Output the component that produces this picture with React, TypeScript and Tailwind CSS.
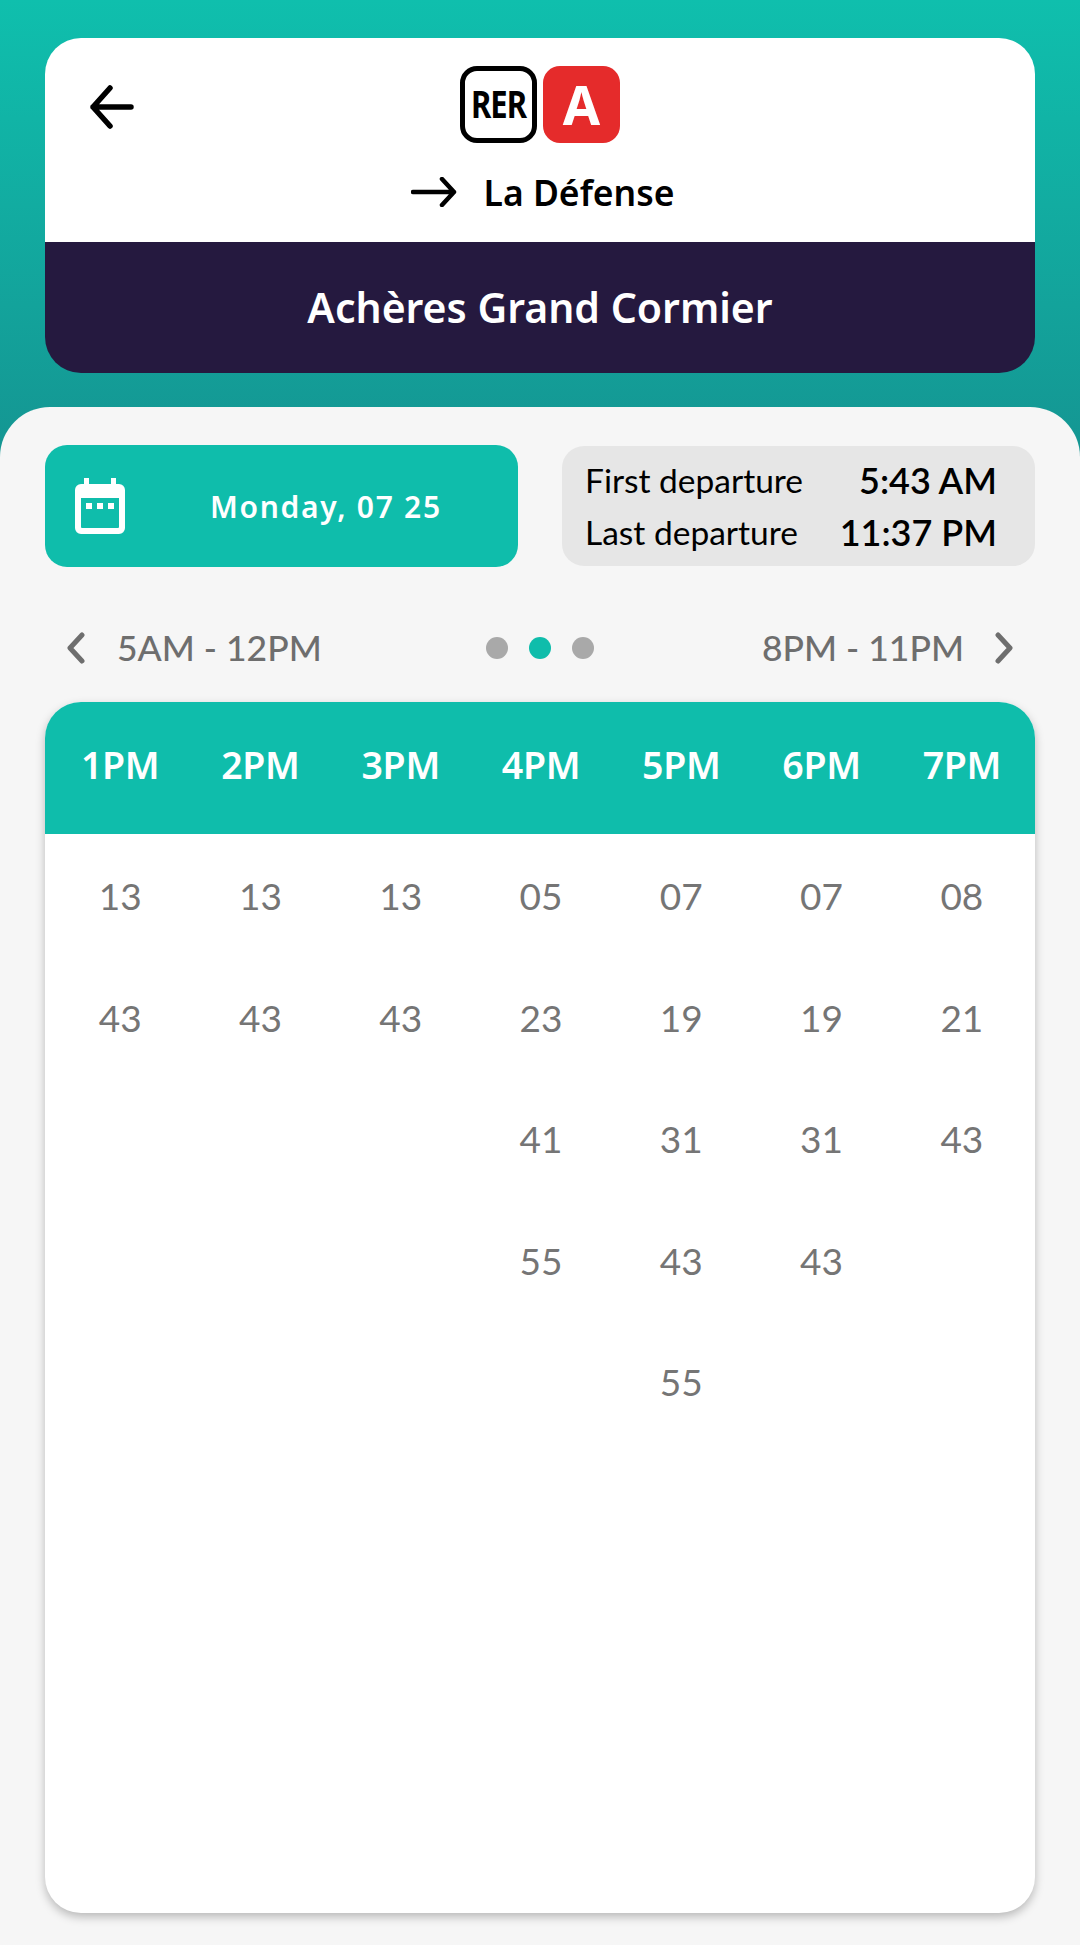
const hours = ['1PM', '2PM', '3PM', '4PM', '5PM', '6PM', '7PM'];

const times: string[][] = [
  ['13', '43'],
  ['13', '43'],
  ['13', '43'],
  ['05', '23', '41', '55'],
  ['07', '19', '31', '43', '55'],
  ['07', '19', '31', '43'],
  ['08', '21', '43'],
];

const ArrowLeft = () => (
  <svg width="46" height="46" viewBox="0 0 46 46" fill="none" stroke="#000" strokeWidth="5.5" strokeLinecap="round" strokeLinejoin="round">
    <path d="M42 23H4M21 4 4 23l17 19" />
  </svg>
);

const ArrowRight = () => (
  <svg width="46" height="30" viewBox="0 0 46 30" fill="none" stroke="#000" strokeWidth="4.5" strokeLinecap="round" strokeLinejoin="round">
    <path d="M2 15h41M31 2l12 13-12 13" />
  </svg>
);

const CalendarIcon = () => (
  <svg width="50" height="56" viewBox="0 0 50 56" fill="#fff">
    <path d="M9 0h5v6h22V0h5v6h3a6 6 0 0 1 6 6v38a6 6 0 0 1-6 6H6a6 6 0 0 1-6-6V12a6 6 0 0 1 6-6h3zM6 20v29a1 1 0 0 0 1 1h36a1 1 0 0 0 1-1V20z" fillRule="evenodd" />
    <rect x="11" y="25" width="6" height="6" />
    <rect x="22" y="25" width="6" height="6" />
    <rect x="33" y="25" width="6" height="6" />
  </svg>
);

const Chevron = ({ right }: { right?: boolean }) => (
  <svg width="20" height="32" viewBox="0 0 20 32" fill="none" stroke="#6e6e6e" strokeWidth="5" strokeLinecap="round" strokeLinejoin="round">
    <path d={right ? 'M4 3l12 13L4 29' : 'M16 3 4 16l12 13'} />
  </svg>
);

export default function App() {
  return (
    <div className="h-[1945px] w-[1080px] overflow-hidden bg-[#f6f6f6] font-['Noto_Sans',sans-serif]">
      <div className="h-[460px] bg-gradient-to-b from-[#0fbfad] to-[#149592] px-[45px] pt-[38px]">
        <div className="h-[335px] overflow-hidden rounded-[36px]">
          <div className="relative h-[204px] bg-white">
            <div className="absolute left-[44px] top-[46px]">
              <ArrowLeft />
            </div>
            <div className="flex justify-center gap-[6px] pt-[28px]">
              <div className="flex h-[77px] w-[77px] items-center justify-center rounded-[17px] border-[5px] border-black bg-white text-[31px] font-bold tracking-[-1px] text-black">
                <span className="scale-y-[1.2]">RER</span>
              </div>
              <div className="flex h-[77px] w-[77px] items-center justify-center rounded-[17px] bg-[#e52b2b] text-[54px] font-bold text-white">
                A
              </div>
            </div>
            <div className="mt-[27px] flex items-center justify-center gap-[27px] pl-[5px]">
              <ArrowRight />
              <span className="text-[35.5px] leading-[44px] font-semibold text-black">La Défense</span>
            </div>
          </div>
          <div className="flex h-[131px] items-center justify-center bg-[#25193f] text-[41px] font-semibold text-white">
            Achères Grand Cormier
          </div>
        </div>
      </div>

      <div className="relative -mt-[53px] h-[1538px] rounded-t-[50px] bg-[#f6f6f6] px-[45px] pt-[38px]">
        <div className="flex gap-[44px]">
          <div className="flex h-[122px] w-[473px] items-center rounded-[22px] bg-[#0fbdab] pl-[30px]">
            <CalendarIcon />
            <span className="ml-[85px] text-[30px] font-semibold tracking-[1.7px] text-white">Monday, 07 25</span>
          </div>
          <div className="mt-[1px] h-[120px] w-[473px] rounded-[22px] bg-[#e6e6e6] pl-[23px] pr-[38px] pt-[8px] font-['Lato',sans-serif] text-black">
            <div className="flex h-[52px] items-center justify-between">
              <span className="text-[33.5px]">First departure</span>
              <span className="text-[36px] font-semibold">5:43 AM</span>
            </div>
            <div className="flex h-[52px] items-center justify-between">
              <span className="text-[33.5px]">Last departure</span>
              <span className="text-[36px] font-semibold">11:37 PM</span>
            </div>
          </div>
        </div>

        <div className="relative mt-[56px] flex h-[50px] items-center justify-between px-[21px] font-['Lato',sans-serif] text-[35.5px] font-medium text-[#6e6e6e]">
          <div className="flex items-center gap-[31px]">
            <Chevron />
            <span>5AM - 12PM</span>
          </div>
          <div className="absolute left-[441px] flex gap-[21px]">
            <div className="h-[22px] w-[22px] rounded-full bg-[#a9a9a9]" />
            <div className="h-[22px] w-[22px] rounded-full bg-[#0fbdab]" />
            <div className="h-[22px] w-[22px] rounded-full bg-[#a9a9a9]" />
          </div>
          <div className="flex items-center gap-[30px]">
            <span>8PM - 11PM</span>
            <Chevron right />
          </div>
        </div>

        <div className="mt-[29px] h-[1211px] overflow-hidden rounded-[36px] bg-white shadow-[0_4px_10px_rgba(0,0,0,0.25)]">
          <div className="grid h-[132px] grid-cols-7 items-center bg-[#0fbdab] pl-[5px] pr-[3px] pb-[6px] text-center text-[37.5px] font-semibold tracking-[-0.3px] text-white">
            {hours.map(hour => (
              <div key={hour}>{hour}</div>
            ))}
          </div>
          <div className="grid grid-cols-7 pl-[5px] pr-[3px] pt-[1px] text-center font-['Lato',sans-serif] text-[37px] text-[#757575]">
            {times.map((col, i) => (
              <div key={i}>
                {col.map((minute, j) => (
                  <div key={j} className="flex h-[121.6px] items-center justify-center">
                    {minute}
                  </div>
                ))}
              </div>
            ))}
          </div>
        </div>
      </div>
    </div>
  );
}
